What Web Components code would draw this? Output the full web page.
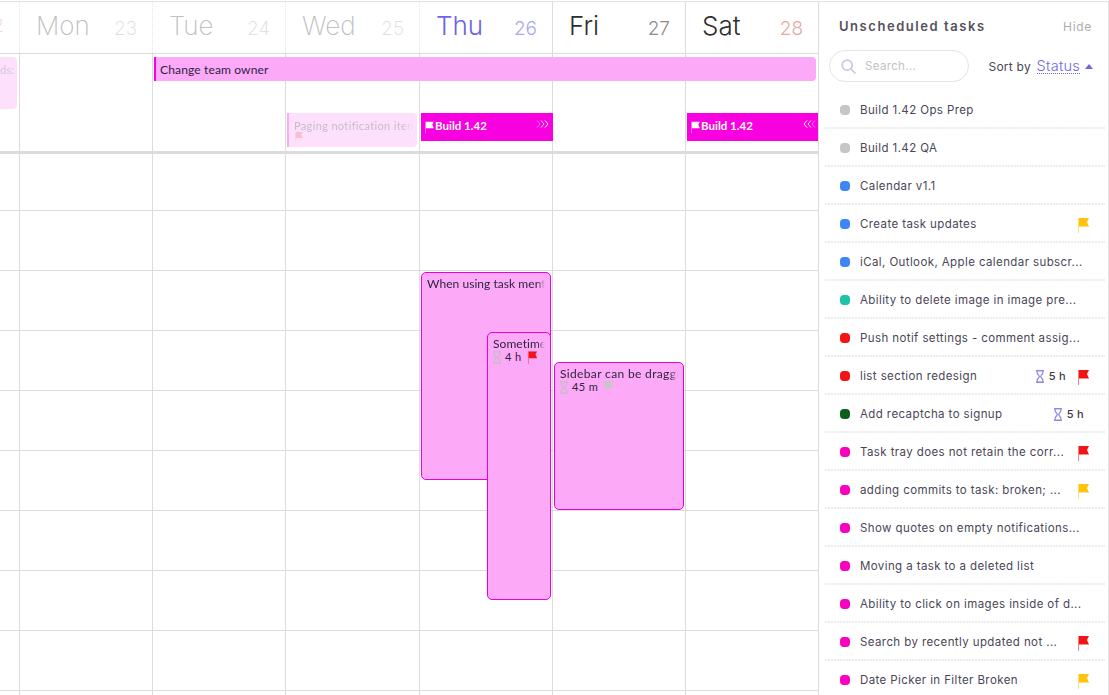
<!DOCTYPE html>
<html>
<head>
<meta charset="utf-8">
<title>Calendar</title>
<style>
    html, body { margin: 0; height: 100%; overflow: hidden; background: #fff; }
</style>
</head>
<body>
<cal-app></cal-app>
<script>
const COLS = '20px 133px 133px 134px 133px 133px 133px';

class FlagIcon extends HTMLElement {
    connectedCallback() {
        const color = this.getAttribute('color') || '#f00';
        this.attachShadow({ mode: 'open' }).innerHTML = `
            <style>
                :host { display: inline-flex; flex: none; }
                svg { display: block; }
            </style>
            <svg width="11" height="15" viewBox="0 0 11 15">
                <rect x="0" y="0" width="1" height="15" fill="${color}" opacity=".55"/>
                <path d="M1 0H11L9 4L11 8.5H1Z" fill="${color}"/>
            </svg>`;
    }
}

class GlassIcon extends HTMLElement {
    connectedCallback() {
        const color = this.getAttribute('color') || '#8f8ae6';
        this.attachShadow({ mode: 'open' }).innerHTML = `
            <style>
                :host { display: inline-flex; flex: none; }
                svg { display: block; }
            </style>
            <svg width="8" height="13" viewBox="0 0 8 13" fill="none" stroke="${color}">
                <path d="M0 .8H8M0 12.2H8" stroke-width="1.6"/>
                <path d="M1.2 1V3.2L3.4 6.5L1.2 9.8V12M6.8 1V3.2L4.6 6.5L6.8 9.8V12" stroke-width="1.2"/>
            </svg>`;
    }
}

class DayHead extends HTMLElement {
    connectedCallback() {
        this.attachShadow({ mode: 'open' }).innerHTML = `
            <style>
                :host {
                    display: flex;
                    align-items: baseline;
                    justify-content: space-between;
                    box-sizing: border-box;
                    height: 51px;
                    padding: 6px 15px 0 16px;
                    border-right: 1px var(--line-style, solid) var(--line, #dcdcdc);
                    overflow: hidden;
                    white-space: nowrap;
                }
                :host([stub]) { justify-content: flex-end; padding-left: 0; }
                .name { font: var(--weight, 200) 26px/36px Inter, sans-serif; color: var(--name); }
                .num { font: var(--weight, 200) 19px/36px Inter, sans-serif; color: var(--num); }
            </style>
            ${this.hasAttribute('stub') ? '' : '<span class="name"><slot name="day"></slot></span>'}
            <span class="num"><slot name="date"></slot></span>`;
    }
}

class BarEvent extends HTMLElement {
    connectedCallback() {
        this.attachShadow({ mode: 'open' }).innerHTML = `
            <style>
                :host {
                    display: flex;
                    align-items: center;
                    box-sizing: border-box;
                    height: 24px;
                    margin: 3px 3px 0 1px;
                    padding-left: 4px;
                    background: #fca9f8;
                    border-left: 2px solid #f600e4;
                    border-radius: 0 4px 4px 0;
                    font: 12px Lato, sans-serif;
                    letter-spacing: .15px;
                    color: #2e2440;
                    white-space: nowrap;
                    overflow: hidden;
                }
            </style>
            <slot></slot>`;
    }
}

class FadedEvent extends HTMLElement {
    connectedCallback() {
        this.attachShadow({ mode: 'open' }).innerHTML = `
            <style>
                :host {
                    display: block;
                    box-sizing: border-box;
                    height: 34px;
                    margin: 0 3px 0 1px;
                    padding: 6px 0 0 5px;
                    background: #fde1fc;
                    border-left: 2px solid #fbaaf6;
                    border-radius: 0 4px 4px 0;
                    font: 11px/13px Lato, sans-serif;
                    letter-spacing: .35px;
                    color: #c8bcca;
                    white-space: nowrap;
                    overflow: hidden;
                }
                .t {
                    margin-right: 4px;
                    overflow: hidden;
                    -webkit-mask-image: linear-gradient(to left, transparent, #000 10px);
                }
                flag-icon { opacity: .5; transform: scale(.7); transform-origin: 0 0; margin-left: 1px; }
            </style>
            <div class="t"><slot></slot></div>
            <flag-icon color="#f3a09c"></flag-icon>`;
    }
}

class BuildBar extends HTMLElement {
    connectedCallback() {
        const left = this.hasAttribute('end');
        const chev = left
            ? `<svg width="14" height="8" viewBox="0 0 14 8" fill="none" stroke="#fff"><path d="M4 .5L1 4L4 7.5"/><path d="M8 .5L5 4L8 7.5" opacity=".8"/><path d="M12 .5L9 4L12 7.5" opacity=".4"/></svg>`
            : `<svg width="14" height="8" viewBox="0 0 14 8" fill="none" stroke="#fff"><path d="M2 .5L5 4L2 7.5" opacity=".4"/><path d="M6 .5L9 4L6 7.5" opacity=".8"/><path d="M10 .5L13 4L10 7.5"/></svg>`;
        this.attachShadow({ mode: 'open' }).innerHTML = `
            <style>
                :host {
                    display: flex;
                    align-items: center;
                    box-sizing: border-box;
                    height: 28px;
                    margin: 0 ${left ? 1 : 0}px 0 1px;
                    padding: 0 ${left ? 1 : 4}px 3px 3px;
                    background: #f800e0;
                    color: #fff;
                    font: 700 11.5px Lato, sans-serif;
                    letter-spacing: 0;
                    white-space: nowrap;
                }
                .flag { transform: scale(.8); margin: 3px 0 0; }
                .txt { flex: 1; }
                svg { margin-top: -4px; }
            </style>
            <flag-icon class="flag" color="#fff"></flag-icon>
            <span class="txt"><slot></slot></span>
            ${chev}`;
    }
}

class TimedEvent extends HTMLElement {
    connectedCallback() {
        const time = this.getAttribute('time');
        const flag = this.getAttribute('flag');
        this.attachShadow({ mode: 'open' }).innerHTML = `
            <style>
                :host {
                    position: absolute;
                    box-sizing: border-box;
                    background: #fca9f8;
                    border: 1px solid #ea00d8;
                    border-radius: 5px;
                    padding: 4px 5px 0;
                    font: 12px/14px Lato, sans-serif;
                    letter-spacing: .05px;
                    color: #2e2440;
                    overflow: hidden;
                }
                .t {
                    white-space: nowrap;
                    overflow: hidden;
                    -webkit-mask-image: linear-gradient(to left, transparent, #000 8px);
                }
                .m { display: flex; align-items: center; height: 14px; font-size: 11px; margin-top: -1px; letter-spacing: .4px; }
                .m span { margin: 0 5px 0 4px; }
            </style>
            <div class="t"><slot></slot></div>
            ${time ? `<div class="m">
                <glass-icon color="#c4bcc6"></glass-icon>
                <span>${time}</span>
                <flag-icon color="${flag}" style="transform:scale(.85)"></flag-icon>
            </div>` : ''}`;
    }
}

class CalHeader extends HTMLElement {
    connectedCallback() {
        this.attachShadow({ mode: 'open' }).innerHTML = `
            <style>
                :host {
                    display: grid;
                    grid-template-columns: ${COLS};
                    margin-top: 1px;
                    border-top: 1px solid #e2e2e2;
                    border-bottom: 1px solid #dcdcdc;
                    --line-style: dotted;
                    --line: #e6e6e6;
                    --name: #c0c0c0;
                    --num: #dcdcdc;
                }
            </style>
            <slot></slot>`;
    }
}

class AllDayRow extends HTMLElement {
    connectedCallback() {
        const cells = Array.from({ length: 7 }, (_, i) => `<i style="grid-column:${i + 1}"></i>`).join('');
        this.attachShadow({ mode: 'open' }).innerHTML = `
            <style>
                :host {
                    display: grid;
                    grid-template-columns: ${COLS};
                    grid-template-rows: 59px 38px;
                    border-bottom: 3px solid #dcdcdc;
                }
                i { grid-row: 1 / 3; border-right: 1px solid #dcdcdc; }
                ::slotted(*) { z-index: 1; }
            </style>
            ${cells}
            <slot></slot>`;
    }
}

class TimeGrid extends HTMLElement {
    connectedCallback() {
        let cells = '';
        for (let r = 0; r < 10; r++) {
            for (let c = 0; c < 7; c++) cells += `<i style="height:${r === 0 ? 56 : 59}px"></i>`;
        }
        this.attachShadow({ mode: 'open' }).innerHTML = `
            <style>
                :host {
                    display: block;
                    position: relative;
                    flex: 1;
                    overflow: hidden;
                }
                .grid { display: grid; grid-template-columns: ${COLS}; }
                i { display: block; border-right: 1px solid #dcdcdc; border-bottom: 1px solid #dcdcdc; }
            </style>
            <div class="grid">${cells}</div>
            <slot></slot>`;
    }
}

class CalBoard extends HTMLElement {
    connectedCallback() {
        this.attachShadow({ mode: 'open' }).innerHTML = `
            <style>
                :host {
                    display: flex;
                    flex-direction: column;
                    width: 819px;
                    flex: none;
                    height: 100%;
                    overflow: hidden;
                }
                ::slotted(*) { flex: none; }
            </style>
            <slot></slot>`;
    }
}

class TaskRow extends HTMLElement {
    connectedCallback() {
        const color = this.getAttribute('color');
        const flag = this.getAttribute('flag');
        const time = this.getAttribute('time');
        this.attachShadow({ mode: 'open' }).innerHTML = `
            <style>
                :host {
                    display: flex;
                    flex: none;
                    align-items: center;
                    box-sizing: border-box;
                    height: 38px;
                    margin-left: 5px;
                    padding: 0 19px 0 16px;
                    position: relative;
                }
                :host::after {
                    content: '';
                    position: absolute;
                    left: 1px;
                    right: 3px;
                    bottom: 0;
                    height: 2px;
                    background: repeating-linear-gradient(90deg, #eeeeee 0 2px, #fbfbfb 2px 3px);
                }
                .dot { width: 10px; height: 10px; border-radius: 4px; background: ${color}; flex: none; }
                .txt {
                    flex: 1;
                    margin-left: 10px;
                    white-space: nowrap;
                    overflow: hidden;
                    font: 400 11.5px Inter, sans-serif;
                    letter-spacing: .4px;
                    color: #4a4657;
                }
                .time {
                    display: flex;
                    align-items: center;
                    gap: 5px;
                    margin-right: 5px;
                    font: 500 11px Inter, sans-serif;
                    letter-spacing: .3px;
                    color: #3a3745;
                    white-space: nowrap;
                }
                flag-icon { margin: 3px 0 0 7px; }
            </style>
            <span class="dot"></span>
            <span class="txt"><slot></slot></span>
            ${time ? `<span class="time"><glass-icon></glass-icon>${time}</span>` : ''}
            ${flag ? `<flag-icon color="${flag}"></flag-icon>` : ''}`;
    }
}

class TaskTray extends HTMLElement {
    connectedCallback() {
        this.attachShadow({ mode: 'open' }).innerHTML = `
            <style>
                :host {
                    display: flex;
                    flex-direction: column;
                    box-sizing: border-box;
                    width: 290px;
                    height: 100%;
                    flex: none;
                    margin-top: 1px;
                    border-top: 1px solid #e2e2e2;
                    border-right: 1px solid #e4e4e4;
                    overflow: hidden;
                    font-family: Inter, sans-serif;
                }
                .head {
                    display: flex;
                    flex: none;
                    justify-content: space-between;
                    align-items: center;
                    height: 48px;
                    padding: 0 16px 0 20px;
                }
                .title { font-size: 13px; font-weight: 600; letter-spacing: 1.55px; color: #55525c; }
                .hide { font-size: 12px; letter-spacing: .7px; color: #adadad; }
                .tools {
                    display: flex;
                    flex: none;
                    align-items: center;
                    justify-content: space-between;
                    height: 32px;
                    padding: 0 15px 0 10px;
                    margin-bottom: 9px;
                }
                .search {
                    display: flex;
                    align-items: center;
                    gap: 9px;
                    box-sizing: border-box;
                    width: 140px;
                    height: 32px;
                    padding-left: 11px;
                    border: 1px solid #e3e3ea;
                    border-radius: 16px;
                    font-size: 11.5px;
                    letter-spacing: .35px;
                    color: #c2c2c8;
                }
                .sort { display: flex; align-items: center; font-size: 12px; color: #4a4657; letter-spacing: .25px; white-space: pre; }
                .status {
                    margin-left: 2px;
                    font-size: 14.5px;
                    font-weight: 300;
                    color: #6e66e6;
                    border-bottom: 1px dotted #6e66e6;
                    line-height: 15px;
                }
                .tri {
                    width: 0;
                    height: 0;
                    margin-left: 5px;
                    border: 4px solid transparent;
                    border-top: 0;
                    border-bottom: 5px solid #6e66e6;
                }
            </style>
            <div class="head">
                <span class="title">Unscheduled tasks</span>
                <span class="hide">Hide</span>
            </div>
            <div class="tools">
                <div class="search">
                    <svg width="15" height="15" viewBox="0 0 15 15" fill="none" stroke="#c6c9e0" stroke-width="1.7">
                        <circle cx="6.2" cy="6.2" r="5"/><path d="M10 10L14 14" stroke-linecap="round"/>
                    </svg>
                    <span>Search...</span>
                </div>
                <div class="sort">Sort by <span class="status">Status</span><span class="tri"></span></div>
            </div>
            <slot></slot>`;
    }
}

class CalApp extends HTMLElement {
    connectedCallback() {
        const days = [
            ['', '22', '#fff', '#f3cfcc'], ['Mon', '23'], ['Tue', '24'], ['Wed', '25'],
            ['Thu', '26', '#6b63e6', '#aba6f0', 'solid', '#dcdcdc'],
            ['Fri', '27', '#2e2e2e', '#8c8c8c', 'solid', '#dcdcdc'],
            ['Sat', '28', '#2e2e2e', '#e8a8a2', 'solid', '#dcdcdc']
        ];
        const heads = days.map(([d, n, a, b, ls, l]) => `
            <day-head ${d ? '' : 'stub'} style="${a ? `--name:${a};--num:${b};` : ''}${ls ? `--line-style:${ls};--line:${l};--weight:300;` : ''}">
                <span slot="day">${d}</span><span slot="date">${n}</span>
            </day-head>`).join('');
        const tasks = [
            ['#c6c6c6', 'Build 1.42 Ops Prep'],
            ['#c6c6c6', 'Build 1.42 QA'],
            ['#3d87f5', 'Calendar v1.1'],
            ['#3d87f5', 'Create task updates', '#ffc30b'],
            ['#3d87f5', 'iCal, Outlook, Apple calendar subscr...'],
            ['#1dc4a8', 'Ability to delete image in image pre...'],
            ['#f21414', 'Push notif settings - comment assig...'],
            ['#f21414', 'list section redesign', '#f21414', '5 h'],
            ['#0c5e1a', 'Add recaptcha to signup', '', '5 h'],
            ['#f800c0', 'Task tray does not retain the corr...', '#f21414'],
            ['#f800c0', 'adding commits to task: broken; ...', '#ffc30b'],
            ['#f800c0', 'Show quotes on empty notifications...'],
            ['#f800c0', 'Moving a task to a deleted list'],
            ['#f800c0', 'Ability to click on images inside of d...'],
            ['#f800c0', 'Search by recently updated not ...', '#f21414'],
            ['#f800c0', 'Date Picker in Filter Broken', '#ffc30b']
        ];
        const rows = tasks.map(([c, t, f, h]) =>
            `<task-row color="${c}"${f ? ` flag="${f}"` : ''}${h ? ` time="${h}"` : ''}>${t}</task-row>`).join('');
        this.attachShadow({ mode: 'open' }).innerHTML = `
            <style>
                :host { display: flex; width: 1109px; height: 695px; overflow: hidden; background: #fff; }
                .stub {
                    grid-column: 1; grid-row: 1;
                    height: 52px; margin: 3px 3px 0 0;
                    background: #fde1fc; border-radius: 0 4px 4px 0;
                    padding-top: 6px; box-sizing: border-box;
                    font: 11px Lato, sans-serif; color: #d6c8d8;
                }
            </style>
            <cal-board>
                <cal-header>${heads}</cal-header>
                <all-day-row>
                    <div class="stub">ds:</div>
                    <bar-event style="grid-column:3 / 8;grid-row:1;align-self:start">Change team owner</bar-event>
                    <faded-event style="grid-column:4;grid-row:2">Paging notification items</faded-event>
                    <build-bar style="grid-column:5;grid-row:2;align-self:start">Build 1.42</build-bar>
                    <build-bar end style="grid-column:7;grid-row:2;align-self:start">Build 1.42</build-bar>
                </all-day-row>
                <time-grid>
                    <timed-event style="left:421px;top:118px;width:130px;height:208px">When using task mentions</timed-event>
                    <timed-event style="left:487px;top:178px;width:64px;height:268px" time="4 h" flag="#f21414">Sometimes</timed-event>
                    <timed-event style="left:554px;top:208px;width:130px;height:148px;letter-spacing:.35px" time="45 m" flag="#c6c6c6">Sidebar can be dragged</timed-event>
                </time-grid>
            </cal-board>
            <task-tray>${rows}</task-tray>`;
    }
}

customElements.define('flag-icon', FlagIcon);
customElements.define('glass-icon', GlassIcon);
customElements.define('day-head', DayHead);
customElements.define('bar-event', BarEvent);
customElements.define('faded-event', FadedEvent);
customElements.define('build-bar', BuildBar);
customElements.define('timed-event', TimedEvent);
customElements.define('cal-header', CalHeader);
customElements.define('all-day-row', AllDayRow);
customElements.define('time-grid', TimeGrid);
customElements.define('cal-board', CalBoard);
customElements.define('task-row', TaskRow);
customElements.define('task-tray', TaskTray);
customElements.define('cal-app', CalApp);
</script>
</body>
</html>
